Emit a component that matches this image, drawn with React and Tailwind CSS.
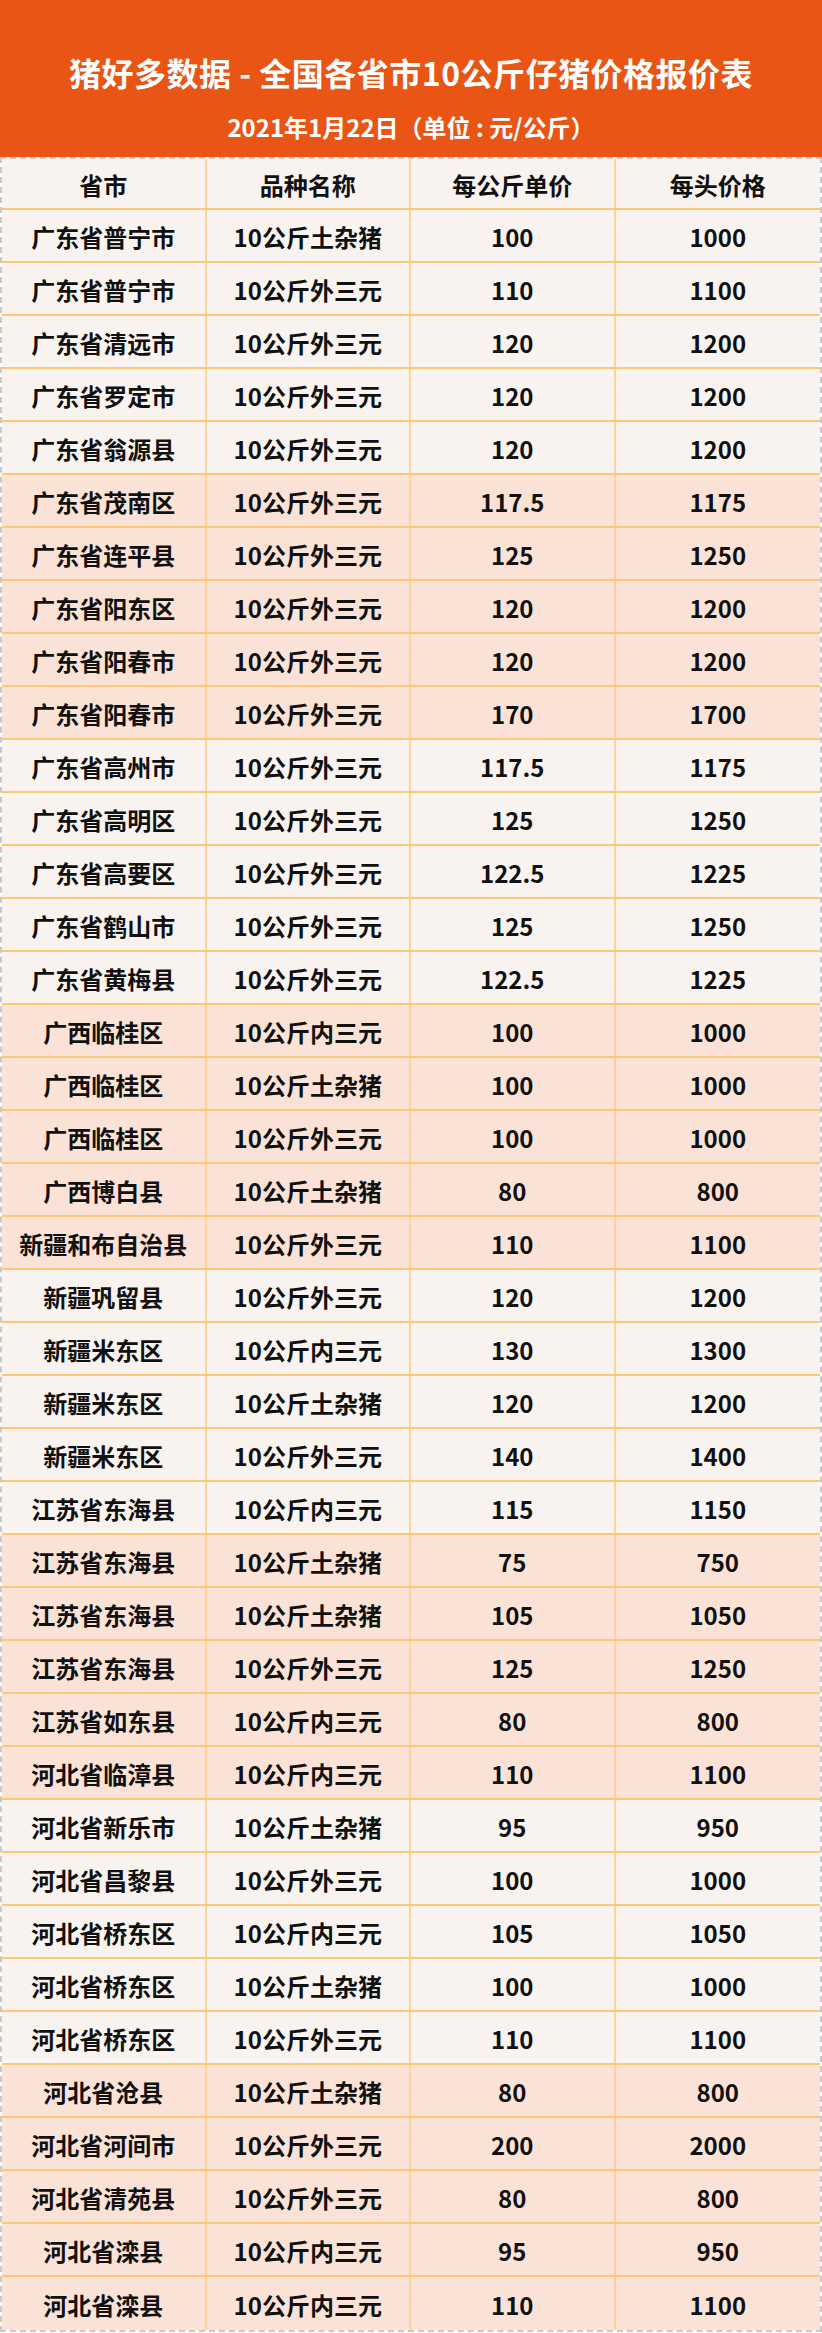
const rows = [
  ["广东省普宁市", "10公斤土杂猪", "100", "1000"],
  ["广东省普宁市", "10公斤外三元", "110", "1100"],
  ["广东省清远市", "10公斤外三元", "120", "1200"],
  ["广东省罗定市", "10公斤外三元", "120", "1200"],
  ["广东省翁源县", "10公斤外三元", "120", "1200"],
  ["广东省茂南区", "10公斤外三元", "117.5", "1175"],
  ["广东省连平县", "10公斤外三元", "125", "1250"],
  ["广东省阳东区", "10公斤外三元", "120", "1200"],
  ["广东省阳春市", "10公斤外三元", "120", "1200"],
  ["广东省阳春市", "10公斤外三元", "170", "1700"],
  ["广东省高州市", "10公斤外三元", "117.5", "1175"],
  ["广东省高明区", "10公斤外三元", "125", "1250"],
  ["广东省高要区", "10公斤外三元", "122.5", "1225"],
  ["广东省鹤山市", "10公斤外三元", "125", "1250"],
  ["广东省黄梅县", "10公斤外三元", "122.5", "1225"],
  ["广西临桂区", "10公斤内三元", "100", "1000"],
  ["广西临桂区", "10公斤土杂猪", "100", "1000"],
  ["广西临桂区", "10公斤外三元", "100", "1000"],
  ["广西博白县", "10公斤土杂猪", "80", "800"],
  ["新疆和布自治县", "10公斤外三元", "110", "1100"],
  ["新疆巩留县", "10公斤外三元", "120", "1200"],
  ["新疆米东区", "10公斤内三元", "130", "1300"],
  ["新疆米东区", "10公斤土杂猪", "120", "1200"],
  ["新疆米东区", "10公斤外三元", "140", "1400"],
  ["江苏省东海县", "10公斤内三元", "115", "1150"],
  ["江苏省东海县", "10公斤土杂猪", "75", "750"],
  ["江苏省东海县", "10公斤土杂猪", "105", "1050"],
  ["江苏省东海县", "10公斤外三元", "125", "1250"],
  ["江苏省如东县", "10公斤内三元", "80", "800"],
  ["河北省临漳县", "10公斤内三元", "110", "1100"],
  ["河北省新乐市", "10公斤土杂猪", "95", "950"],
  ["河北省昌黎县", "10公斤外三元", "100", "1000"],
  ["河北省桥东区", "10公斤内三元", "105", "1050"],
  ["河北省桥东区", "10公斤土杂猪", "100", "1000"],
  ["河北省桥东区", "10公斤外三元", "110", "1100"],
  ["河北省沧县", "10公斤土杂猪", "80", "800"],
  ["河北省河间市", "10公斤外三元", "200", "2000"],
  ["河北省清苑县", "10公斤外三元", "80", "800"],
  ["河北省滦县", "10公斤内三元", "95", "950"],
  ["河北省滦县", "10公斤内三元", "110", "1100"],
];

const headers = ["省市", "品种名称", "每公斤单价", "每头价格"];

const Row = ({ cells, pink, last }) => (
  <div
    className={
      "grid grid-cols-4 h-[53px] " +
      (pink ? "bg-[#fae3d6] " : "bg-[#f8f3ef] ") +
      (last ? "" : "border-b-2 border-[#fbc877]")
    }
  >
    {cells.map((c, i) => (
      <div
        key={i}
        className={
          "flex items-center justify-center pt-[3px] text-[24px] font-bold text-[#111] " +
          (i < 3 ? "border-r-2 border-[#fcd39a]" : "")
        }
      >
        {c}
      </div>
    ))}
  </div>
);

const App = () => {
  return (
    <div
      className="w-[822px] bg-white"
      style={{ fontFamily: '"Noto Sans CJK SC", "Noto Sans", sans-serif' }}
    >
      {/* title block */}
      <div className="h-[157px] bg-[#e85515] flex flex-col items-center text-white font-bold">
        <h1 className="mt-[52px] text-[32px] leading-[40px] tracking-[0.5px]">
          猪好多数据 - 全国各省市10公斤仔猪价格报价表
        </h1>
        <p className="mt-[20px] text-[24px] leading-[30px]">
          2021年1月22日（单位 : 元/公斤）
        </p>
      </div>

      {/* table */}
      <div className="border-2 border-dashed border-[#c9c9c9]">
        <div className="grid grid-cols-4 h-[51px] bg-[#f8f3ef] border-b-2 border-[#fbc877]">
          {headers.map((h, i) => (
            <div
              key={h}
              className={
                "flex items-center justify-center pt-[3px] text-[24px] font-bold text-[#111] " +
                (i < 3 ? "border-r-2 border-[#fcd39a]" : "")
              }
            >
              {h}
            </div>
          ))}
        </div>
        {rows.map((r, idx) => (
          <Row
            key={idx}
            cells={r}
            pink={Math.floor(idx / 5) % 2 === 1}
            last={idx === rows.length - 1}
          />
        ))}
      </div>
    </div>
  );
};

export default App;
